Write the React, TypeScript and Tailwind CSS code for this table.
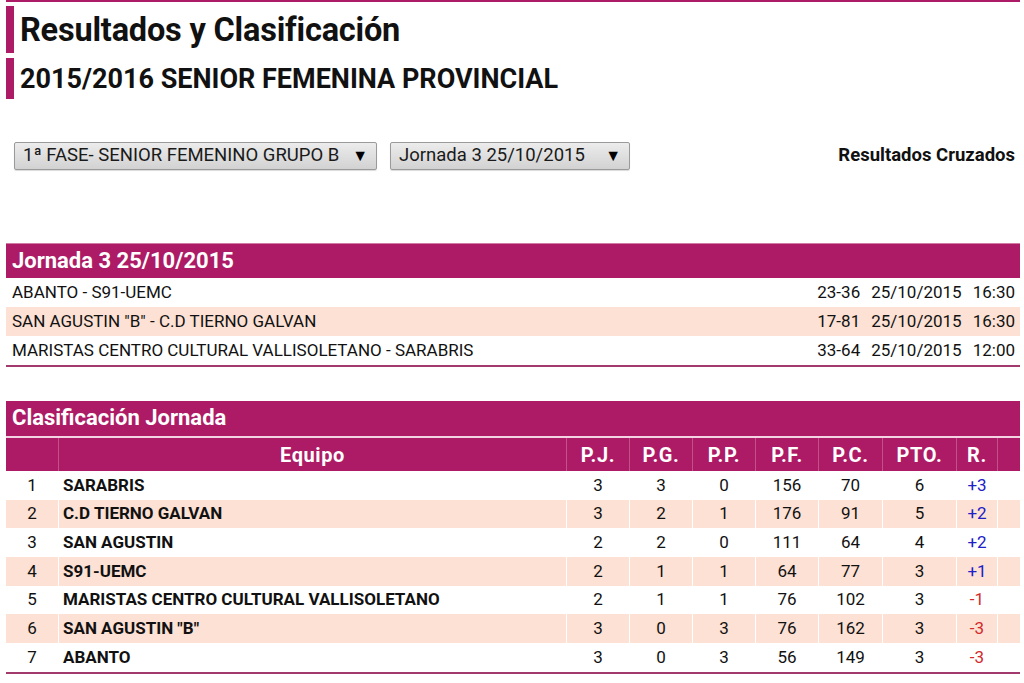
import React from "react";

const M = "bg-[#ad1a65]";

const matches = [
  { t: "ABANTO - S91-UEMC", s: "23-36", d: "25/10/2015", h: "16:30" },
  { t: 'SAN AGUSTIN "B" - C.D TIERNO GALVAN', s: "17-81", d: "25/10/2015", h: "16:30" },
  { t: "MARISTAS CENTRO CULTURAL VALLISOLETANO - SARABRIS", s: "33-64", d: "25/10/2015", h: "12:00" },
];

const standings = [
  ["1", "SARABRIS", "3", "3", "0", "156", "70", "6", "+3"],
  ["2", "C.D TIERNO GALVAN", "3", "2", "1", "176", "91", "5", "+2"],
  ["3", "SAN AGUSTIN", "2", "2", "0", "111", "64", "4", "+2"],
  ["4", "S91-UEMC", "2", "1", "1", "64", "77", "3", "+1"],
  ["5", "MARISTAS CENTRO CULTURAL VALLISOLETANO", "2", "1", "1", "76", "102", "3", "-1"],
  ["6", 'SAN AGUSTIN "B"', "3", "0", "3", "76", "162", "3", "-3"],
  ["7", "ABANTO", "3", "0", "3", "56", "149", "3", "-3"],
];

const widths = ["w-[53px]", "w-[508px]", "w-[63px]", "w-[63px]", "w-[63px]", "w-[63px]", "w-[64px]", "w-[74px]", "w-[41px]", "flex-1"];
const heads = ["", "Equipo", "P.J.", "P.G.", "P.P.", "P.F.", "P.C.", "PTO.", "R.", ""];

function Select({ label, w }: { label: string; w: string }) {
  return (
    <div
      className={`${w} h-[28px] flex items-center justify-between pl-[8px] pr-[8px] border border-[#9a9a9a] rounded-[2px] bg-gradient-to-b from-[#ececec] to-[#d2d2d2] shadow-[0_1px_1px_rgba(0,0,0,0.15)] text-[18.5px] text-[#1a1a1a]`}
    >
      <span>{label}</span>
      <span className="text-[16px] text-black">▼</span>
    </div>
  );
}

export default function App() {
  return (
    <div className="w-[1024px] h-[683px] overflow-hidden bg-white font-['Roboto',sans-serif] text-[#111]">
      <div className="ml-[6px] mr-[4px] h-[2px] bg-[#ad1a65]" />
      <div className="ml-[6px] mt-[4px] flex h-[47px]">
        <div className={`w-[8px] ${M}`} />
        <h1 className="pl-[6px] text-[32.5px] font-bold leading-[49px] tracking-[-0.2px]">Resultados y Clasificación</h1>
      </div>
      <div className="ml-[6px] mt-[5px] flex h-[41px]">
        <div className={`w-[8px] ${M}`} />
        <h2 className="pl-[6px] text-[27px] font-bold leading-[42px]">2015/2016 SENIOR FEMENINA PROVINCIAL</h2>
      </div>

      <div className="mt-[43px] flex items-center pl-[14px] pr-[9px] h-[28px]">
        <Select label="1ª FASE- SENIOR FEMENINO GRUPO B" w="w-[363px]" />
        <div className="w-[13px]" />
        <Select label="Jornada 3 25/10/2015" w="w-[240px]" />
        <div className="flex-1" />
        <span className="text-[18.5px] font-bold">Resultados Cruzados</span>
      </div>

      <div className="ml-[6px] mr-[4px] mt-[73px]">
        <div className={`${M} h-[35px] flex items-center pl-[6px] pb-[2px] text-white text-[22px] font-bold border-t border-[#d07aa4]`}>
          Jornada 3 25/10/2015
        </div>
        {matches.map((m, i) => (
          <div
            key={i}
            className={`h-[29px] flex items-center pl-[6px] pr-[5px] text-[17px] ${i % 2 === 1 ? "bg-[#fde1d4]" : "bg-white"}`}
          >
            <span className="flex-1">{m.t}</span>
            <span>{m.s}</span>
            <span className="ml-[11px]">{m.d}</span>
            <span className="ml-[11px]">{m.h}</span>
          </div>
        ))}
        <div className="h-[2px] bg-[#a33a6d]" />
      </div>

      <div className="ml-[6px] mr-[4px] mt-[34px]">
        <div className={`${M} h-[35px] flex items-center pl-[6px] pb-[2px] text-white text-[22px] font-bold`}>
          Clasificación Jornada
        </div>
        <div className="h-[2px] bg-[#f4d4e3]" />
        <div className={`${M} h-[33px] flex text-white text-[20px] font-bold tracking-[0.6px]`}>
          {heads.map((h, i) => (
            <div
              key={i}
              className={`${widths[i]} flex items-center justify-center ${i < heads.length - 1 ? "border-r border-[#c25089]" : ""}`}
            >
              {h}
            </div>
          ))}
        </div>
        {standings.map((r, ri) => (
          <div key={ri} className={`h-[28.7px] flex text-[17px] ${ri % 2 === 1 ? "bg-[#fde1d4]" : "bg-white"}`}>
            {r.map((c, ci) => (
              <div
                key={ci}
                className={`${widths[ci]} flex items-center border-r border-white ${ci === 1 ? "pl-[4px] font-bold" : "justify-center"} ${
                  ci === 8 ? (c.startsWith("+") ? "text-[#2020c8]" : "text-[#d42a2a]") : ""
                }`}
              >
                {c}
              </div>
            ))}
            <div className="flex-1" />
          </div>
        ))}
        <div className="h-[2px] bg-[#a33a6d]" />
      </div>
    </div>
  );
}
